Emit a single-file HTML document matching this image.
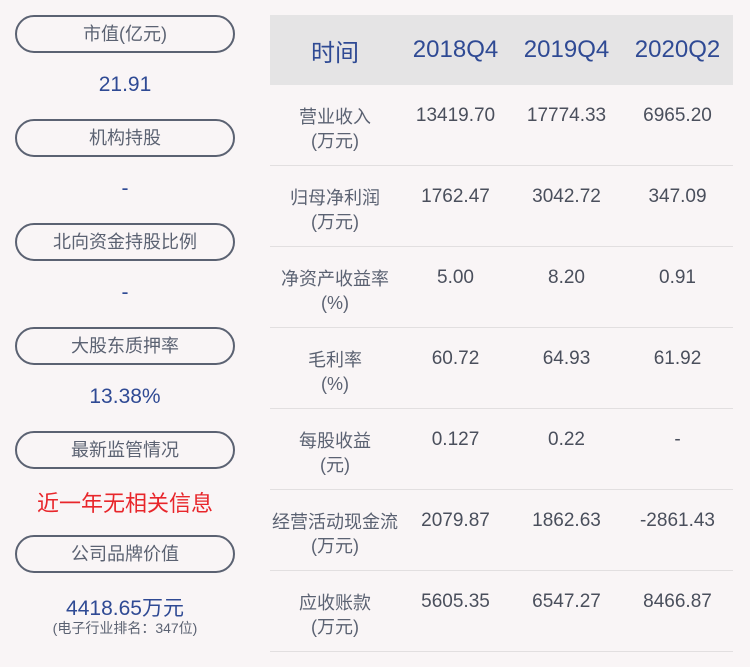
<!DOCTYPE html>
<html><head><meta charset="utf-8"><style>
body{margin:0;width:750px;height:667px;background:#f9f5f6;font-family:"Liberation Sans","Noto Sans CJK SC",sans-serif;position:relative;overflow:hidden}
.pill{position:absolute;left:15px;width:216px;height:34px;border:2px solid #5b6272;border-radius:19px;text-align:center;line-height:34px;font-size:18px;color:#5b6272}
.val{position:absolute;left:15px;width:220px;text-align:center;font-size:21px;color:#2f4a94}
.tbl{position:absolute;left:270px;top:15px;width:463px}
.hd{height:70px;background:#e5e4e5;display:flex;align-items:center;font-size:24px;color:#2f4a94}
.hd .c0{padding-top:0}
.row{height:80px;border-bottom:1px solid #e2dfe0;display:flex;color:#5b6272}
.c0{width:130px;text-align:center}
.c{width:111px;text-align:center}
.row .c0{font-size:18px;line-height:24px;padding-top:20px}
.row .c{font-size:19px;color:#4a4f5c;padding-top:20px;line-height:22px}
</style></head><body>
<div class="pill" style="top:15px">市值(亿元)</div>
<div class="val" style="top:73px">21.91</div>
<div class="pill" style="top:119px">机构持股</div>
<div class="val" style="top:177px">-</div>
<div class="pill" style="top:223px">北向资金持股比例</div>
<div class="val" style="top:281px">-</div>
<div class="pill" style="top:327px">大股东质押率</div>
<div class="val" style="top:385px">13.38%</div>
<div class="pill" style="top:431px">最新监管情况</div>
<div class="val" style="top:486px;color:#e8262b;font-size:22px">近一年无相关信息</div>
<div class="pill" style="top:535px">公司品牌价值</div>
<div class="val" style="top:592px">4418.65万元</div>
<div class="val" style="top:618px;font-size:14px;color:#5b6272">(电子行业排名：347位)</div>
<div class="tbl">
<div class="hd"><div class="c0">时间</div><div class="c">2018Q4</div><div class="c">2019Q4</div><div class="c">2020Q2</div></div>
<div class="row"><div class="c0">营业收入<br>(万元)</div><div class="c">13419.70</div><div class="c">17774.33</div><div class="c">6965.20</div></div>
<div class="row"><div class="c0">归母净利润<br>(万元)</div><div class="c">1762.47</div><div class="c">3042.72</div><div class="c">347.09</div></div>
<div class="row"><div class="c0">净资产收益率<br>(%)</div><div class="c">5.00</div><div class="c">8.20</div><div class="c">0.91</div></div>
<div class="row"><div class="c0">毛利率<br>(%)</div><div class="c">60.72</div><div class="c">64.93</div><div class="c">61.92</div></div>
<div class="row"><div class="c0">每股收益<br>(元)</div><div class="c">0.127</div><div class="c">0.22</div><div class="c">-</div></div>
<div class="row"><div class="c0">经营活动现金流<br>(万元)</div><div class="c">2079.87</div><div class="c">1862.63</div><div class="c">-2861.43</div></div>
<div class="row"><div class="c0">应收账款<br>(万元)</div><div class="c">5605.35</div><div class="c">6547.27</div><div class="c">8466.87</div></div>
</div>
</body></html>
